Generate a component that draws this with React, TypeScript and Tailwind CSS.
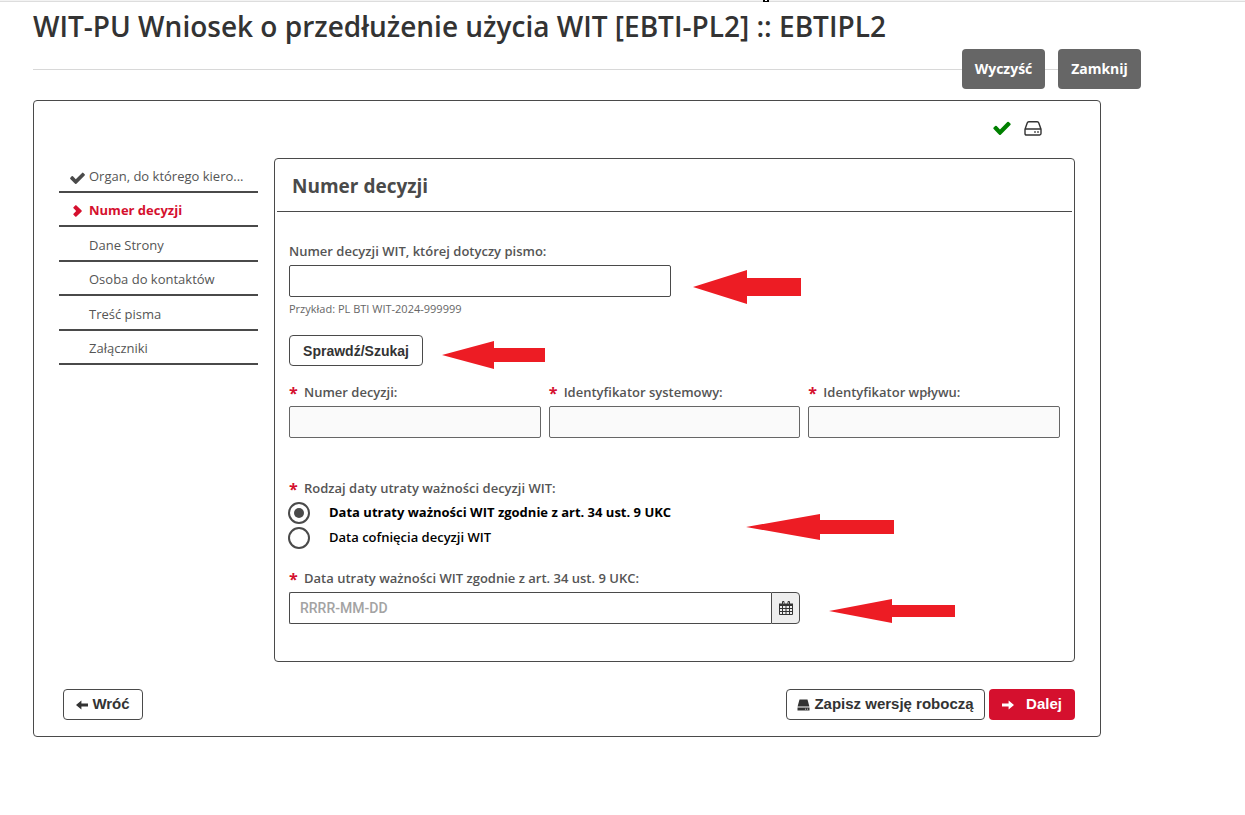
import { useState } from 'react';

const steps = [
  { label: 'Organ, do którego kiero...', state: 'done' },
  { label: 'Numer decyzji', state: 'current' },
  { label: 'Dane Strony', state: 'todo' },
  { label: 'Osoba do kontaktów', state: 'todo' },
  { label: 'Treść pisma', state: 'todo' },
  { label: 'Załączniki', state: 'todo' },
];

const reasons = [
  { id: 'art34', label: 'Data utraty ważności WIT zgodnie z art. 34 ust. 9 UKC' },
  { id: 'cofniecie', label: 'Data cofnięcia decyzji WIT' },
];

function CheckIcon({ className }: { className: string }) {
  return (
    <svg viewBox="121 270 1550 1252" className={className} fill="currentColor" aria-hidden="true">
      <path d="M1671 566q0 40-28 68l-724 724-136 136q-28 28-68 28t-68-28l-136-136-362-362q-28-28-28-68t28-68l136-136q28-28 68-28t68 28l294 295 656-657q28-28 68-28t68 28l136 136q28 28 28 68z" />
    </svg>
  );
}

function ChevronIcon() {
  return (
    <svg viewBox="0 0 9 12" className="mt-1 h-3 w-[9px]" fill="currentColor" aria-hidden="true">
      <path d="M0.3 2.4 2.4 0.3 3.2 0.3 8.7 5.6 8.7 6.4 3.2 11.7 2.4 11.7 0.3 9.6 0.3 8.9 3.2 6 0.3 3.1z" />
    </svg>
  );
}

function DriveIcon() {
  return (
    <svg viewBox="0 0 18 15" className="h-[15px] w-[18px]" fill="none" stroke="#333" strokeWidth="1.4" aria-hidden="true">
      <path d="M1 8.2 3.2 2Q3.6 0.8 4.8 0.8H13.2Q14.4 0.8 14.8 2L17 8.2V12.6Q17 14 15.6 14H2.4Q1 14 1 12.6zM1 8H17" />
      <path d="M10.2 11h1.6M13.2 11h1.6" strokeWidth="1.6" />
    </svg>
  );
}

function DriveSolidIcon() {
  return (
    <svg viewBox="0 0 13 12" className="h-3 w-[13px]" fill="currentColor" aria-hidden="true">
      <path d="M2.5 0.4H10.5L12.4 7.6H0.6z" />
      <path fillRule="evenodd" d="M0.5 8.6H12.5V11.6H0.5zM8 9.7V10.6H9V9.7zM10 9.7V10.6H11V9.7z" />
    </svg>
  );
}

function CalendarIcon() {
  return (
    <svg viewBox="0 0 14 14" className="h-[14px] w-[14px]" fill="none" stroke="#333" aria-hidden="true">
      <path d="M0.5 5V13.5H13.5V5M0.5 7.5H13.5M0.5 10.5H13.5M3.5 5V13.5M7 5V13.5M10.5 5V13.5" />
      <path d="M0 2.5h14V5H0z" fill="#333" stroke="none" />
      <path d="M3.5 0.5h1.5V3.5h-1.5zM9 0.5h1.5V3.5h-1.5z" fill="#eee" />
    </svg>
  );
}

function ArrowIcon({ className = '' }: { className?: string }) {
  return (
    <svg viewBox="0 0 12 10" className={`h-[10px] w-3 ${className}`} fill="currentColor" aria-hidden="true">
      <path d="M0 5 5.4 0.4V3.4H12V6.6H5.4V9.6z" />
    </svg>
  );
}

// red hint arrow laid over the form, always pointing left
function Pointer({ className, head, w, h, shaft }: { className: string; head: number; w: number; h: number; shaft: number }) {
  const top = (h - shaft) / 2;
  return (
    <svg width={w} height={h} viewBox={`0 0 ${w} ${h}`} className={`pointer-events-none absolute ${className}`} aria-hidden="true">
      <path fill="#ed1c24" d={`M0 ${h / 2} ${head} 0V${top}H${w}V${h - top}H${head}V${h}z`} />
    </svg>
  );
}

function Label({ htmlFor, children }: { htmlFor: string; children: string }) {
  return (
    <label htmlFor={htmlFor} className="flex h-5 items-center pt-0.5 text-[13px] font-semibold whitespace-nowrap text-[#555]">
      <Star />
      {children}
    </label>
  );
}

function Star() {
  return <span className="w-[15px] shrink-0 text-base leading-5 font-bold text-[#d5102e]">*</span>;
}

function ReadonlyField({ id, label }: { id: string; label: string }) {
  return (
    <div>
      <Label htmlFor={id}>{label}</Label>
      <input id={id} type="text" readOnly className="mt-1 block h-8 w-full rounded-xs border border-[#666] bg-[#fafafa] px-2.5 text-sm" />
    </div>
  );
}

export default function App() {
  const [decision, setDecision] = useState('');
  const [reason, setReason] = useState('art34');
  const [date, setDate] = useState('');

  const clear = () => {
    setDecision('');
    setReason('art34');
    setDate('');
  };

  return (
    <div className="bg-white font-['Open_Sans','Noto_Sans',sans-serif] text-[#333]">
      <div className="relative h-[2px] border-b border-[#ddd] bg-[#f3f3f3]">
        <span className="absolute top-0 left-[763px] h-[2px] w-[6px] border-x-2 border-b border-black bg-white" />
      </div>

      <div className="pr-[104px] pb-8 pl-[33px]">
        <h1 className="pt-[6px] pb-[5px] text-[28px] leading-9 font-semibold">
          WIT-PU Wniosek o przedłużenie użycia WIT [EBTI-PL2] :: EBTIPL2
        </h1>

        <div className="flex items-center">
          <div className="h-px flex-1 bg-[#d8d8d8]" />
          <button type="button" onClick={clear} className="h-10 w-[83px] rounded bg-[#666] text-sm font-bold text-white">
            Wyczyść
          </button>
          <div className="h-px w-[13px] bg-[#d8d8d8]" />
          <button type="button" className="h-10 w-[83px] rounded bg-[#666] text-sm font-bold text-white">
            Zamknij
          </button>
        </div>

        <main className="mt-[11px] mr-10 rounded border border-[#4a4a4a] px-[25px] pb-4">
          <div className="flex h-[57px] items-center justify-end gap-[13px] pr-[33px] pb-[3px]">
            <CheckIcon className="h-[14px] w-[18px] text-[#008000]" />
            <DriveIcon />
          </div>

          <div className="flex items-start gap-4">
            <nav className="grid h-[207px] w-[199px] shrink-0 grid-cols-1 grid-rows-6 text-[13px] text-[#555]">
              {steps.map((step) => (
                <a
                  key={step.label}
                  href="#"
                  className={
                    step.state === 'current'
                      ? 'flex items-center border-b-2 border-[#4a4a4a] pr-2 font-bold text-[#d5102e]'
                      : 'flex items-center border-b-2 border-[#4a4a4a] pr-2'
                  }
                >
                  <span className="flex w-[30px] shrink-0 justify-center pl-[7px]">
                    {step.state === 'done' && <CheckIcon className="mt-2 h-3 w-[15px] text-[#4a4a4a]" />}
                    {step.state === 'current' && <ChevronIcon />}
                  </span>
                  <span className="pt-1 whitespace-nowrap">{step.label}</span>
                </a>
              ))}
            </nav>

            <section className="min-w-0 flex-1 rounded border border-[#4a4a4a]">
              <h2 className="mx-[2px] flex h-[53px] items-center border-b border-[#4a4a4a] px-[15px] pt-0.5 text-[19px] font-bold text-[#4a4a4a]">
                Numer decyzji
              </h2>

              <form className="px-[14px] pt-[29px] pb-[37px]" onSubmit={(e) => e.preventDefault()}>
                <div className="relative grid grid-cols-2 gap-2">
                  <div>
                    <label htmlFor="decision" className="flex h-5 items-center pt-0.5 text-[13px] font-semibold whitespace-nowrap text-[#555]">
                      Numer decyzji WIT, której dotyczy pismo:
                    </label>
                    <input
                      id="decision"
                      type="text"
                      value={decision}
                      onChange={(e) => setDecision(e.target.value)}
                      className="mt-1 block h-8 w-full rounded-xs border border-[#4a4a4a] px-2.5 text-sm"
                    />
                    <p className="mt-1 text-[11px] leading-4 text-[#666]">Przykład: PL BTI WIT-2024-999999</p>
                  </div>
                  <Pointer className="top-[29px] left-[404px]" w={108} h={34} head={54} shaft={18} />
                </div>

                <div className="relative mt-[18px]">
                  <button
                    type="button"
                    className="block h-[31px] w-[134px] rounded border border-[#4a4a4a] bg-white font-['Liberation_Sans',Arial,sans-serif] text-sm font-bold"
                  >
                    Sprawdź/Szukaj
                  </button>
                  <Pointer className="top-[6px] left-[153px]" w={103} h={28} head={52} shaft={14} />
                </div>

                <div className="mt-4 grid grid-cols-3 gap-2">
                  <ReadonlyField id="number" label="Numer decyzji:" />
                  <ReadonlyField id="system-id" label="Identyfikator systemowy:" />
                  <ReadonlyField id="inflow-id" label="Identyfikator wpływu:" />
                </div>

                <fieldset className="relative mt-10">
                  <legend className="flex h-5 items-center pt-0.5 text-[13px] font-semibold text-[#555]">
                    <Star />
                    Rodzaj daty utraty ważności decyzji WIT:
                  </legend>
                  <div className="mt-[2px]">
                    {reasons.map((item) => (
                      <label key={item.id} className="flex h-[25px] items-center gap-[19px] text-[13px] font-semibold text-black">
                        <input
                          type="radio"
                          name="reason"
                          checked={reason === item.id}
                          onChange={() => setReason(item.id)}
                          className="-ml-px h-[22px] w-[22px] shrink-0 appearance-none rounded-full border-2 border-[#4a4a4a] bg-white bg-clip-content p-1 checked:bg-[#4a4a4a]"
                        />
                        <span className={reason === item.id ? 'font-bold' : ''}>{item.label}</span>
                      </label>
                    ))}
                  </div>
                  <Pointer className="top-4 left-[457px]" w={148} h={26} head={74} shaft={14} />
                </fieldset>

                <div className="relative mt-[18px] grid grid-cols-3 gap-2">
                  <div className="col-span-2">
                    <Label htmlFor="date">Data utraty ważności WIT zgodnie z art. 34 ust. 9 UKC:</Label>
                    <div className="mt-1 flex h-8">
                      <input
                        id="date"
                        type="text"
                        placeholder="RRRR-MM-DD"
                        value={date}
                        onChange={(e) => setDate(e.target.value)}
                        className="min-w-0 flex-1 rounded-l-xs border border-r-0 border-[#4a4a4a] px-2.5 font-['Roboto',sans-serif] text-sm font-medium placeholder:text-[#a3a3a3]"
                      />
                      <button
                        type="button"
                        aria-label="Wybierz datę"
                        className="flex w-[29px] items-center justify-center rounded-r border border-[#4a4a4a] bg-[#eee]"
                      >
                        <CalendarIcon />
                      </button>
                    </div>
                  </div>
                  <Pointer className="top-[31px] left-[540px]" w={126} h={24} head={63} shaft={12} />
                </div>
              </form>
            </section>
          </div>

          <div className="mt-[27px] flex gap-1 pl-1 font-['Liberation_Sans',Arial,sans-serif] text-[15px] font-bold">
            <button type="button" className="mr-auto flex h-[31px] w-20 items-center justify-center gap-1 rounded border border-[#4a4a4a] bg-white">
              <ArrowIcon />
              Wróć
            </button>
            <button type="button" className="flex h-[31px] w-[199px] items-center justify-center gap-1 rounded border border-[#4a4a4a] bg-white">
              <DriveSolidIcon />
              Zapisz wersję roboczą
            </button>
            <button type="button" className="flex h-[31px] w-[86px] items-center justify-center gap-3 rounded bg-[#d5102e] text-white">
              <ArrowIcon className="rotate-180" />
              Dalej
            </button>
          </div>
        </main>
      </div>
    </div>
  );
}
